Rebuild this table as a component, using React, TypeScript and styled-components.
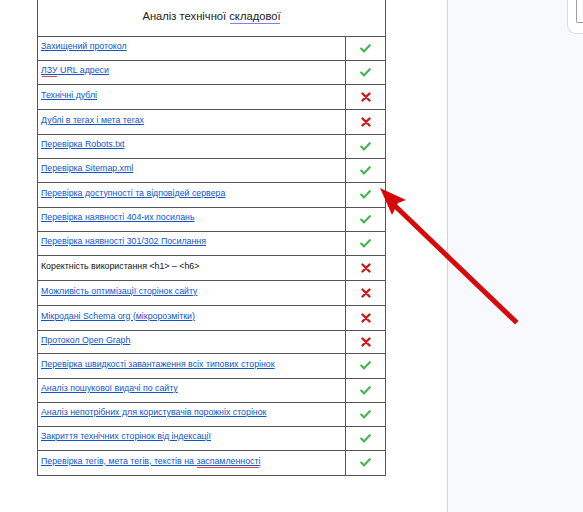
import React from "react";
import styled, { createGlobalStyle } from "styled-components";

const Global = createGlobalStyle`
  html, body { margin: 0; padding: 0; }
  body { width: 583px; height: 512px; overflow: hidden; background: #ffffff; font-family: "Liberation Sans", Arial, sans-serif; }
`;

const Page = styled.div`
  position: relative;
  display: flex;
  width: 583px;
  height: 512px;
  overflow: hidden;
`;

const DocArea = styled.div`
  width: 448px;
  flex: none;
  background: #ffffff;
  border-right: 1px solid #d3d3d3;
  padding-left: 37px;
  box-sizing: border-box;
`;

const SidePanel = styled.div`
  flex: 1;
  background: #f8f9fd;
  display: flex;
  justify-content: flex-end;
  align-items: flex-start;
`;

const CornerCard = styled.div`
  width: 16px;
  height: 34px;
  box-sizing: border-box;
  border: 1px solid #dadce0;
  border-top: none;
  border-right: none;
  border-bottom-left-radius: 9px;
  background: #ffffff;
  padding-left: 8px;
`;

const CornerInner = styled.div`
  width: 100%;
  height: 23px;
  box-sizing: border-box;
  border: 1px solid #9aa0a6;
  border-top: none;
  border-right: none;
  border-bottom-left-radius: 2px;
`;

const Table = styled.table`
  border-collapse: collapse;
  width: 348px;
  table-layout: fixed;
`;

const Col = styled.col<{ $w: number }>`
  width: ${(p) => p.$w}px;
`;

const HeaderCell = styled.th`
  height: 36px;
  padding: 0 0 3px;
  border: 1px solid #555555;
  border-top: none;
  font-weight: normal;
  font-size: 11.2px;
  color: #222222;
  text-align: center;
  vertical-align: middle;
  box-sizing: border-box;
`;

const Row = styled.tr<{ $h: number }>`
  height: ${(p) => p.$h}px;
`;

const LabelCell = styled.td`
  border: 1px solid #555555;
  padding: 0 4px 4px 3px;
  font-size: 8.8px;
  vertical-align: middle;
  white-space: nowrap;
  overflow: hidden;
`;

const MarkCell = styled.td`
  border: 1px solid #555555;
  padding: 0;
  text-align: center;
  vertical-align: middle;
  line-height: 0;
`;

const LinkText = styled.a`
  color: #1155cc;
  text-decoration: underline;
  text-underline-offset: 1px;
`;

const PlainText = styled.span`
  color: #111111;
`;

const Spell = styled.span<{ $c: string }>`
  box-shadow: 0 2px 0 -1px ${(p) => p.$c};
  padding-bottom: 1px;
`;

const Overlay = styled.svg`
  position: absolute;
  left: 0;
  top: 0;
  pointer-events: none;
`;

const Check = () => (
  <svg width="11" height="9" viewBox="0 0 11 9">
    <path d="M1.2 4.6 L4 7.4 L9.8 1.2" fill="none" stroke="#3db54a" strokeWidth="2.1" strokeLinecap="round" strokeLinejoin="round" />
  </svg>
);

const Cross = () => (
  <svg width="10" height="10" viewBox="0 0 10 10">
    <path d="M1.5 1.5 L8.5 8.5 M8.5 1.5 L1.5 8.5" fill="none" stroke="#cc1a1a" strokeWidth="2.4" strokeLinecap="round" />
  </svg>
);

type Item = { text: React.ReactNode; ok: boolean; link?: boolean };

const items: Item[] = [
  { text: "Захищений протокол", ok: true },
  { text: <><Spell $c="#e0434a">ЛЗУ</Spell> URL адреси</>, ok: true },
  { text: "Технічні дублі", ok: false },
  { text: "Дублі в тегах і мета тегах", ok: false },
  { text: "Перевірка Robots.txt", ok: true },
  { text: "Перевірка Sitemap.xml", ok: true },
  { text: "Перевірка доступності та відповідей сервера", ok: true },
  { text: "Перевірка наявності 404-их посилань", ok: true },
  { text: "Перевірка наявності 301/302 Посилання", ok: true },
  { text: "Коректність використання <h1> – <h6>", ok: false, link: false },
  { text: "Можливість оптимізації сторінок сайту", ok: false },
  { text: "Мікродані Schema org (мікророзмітки)", ok: false },
  { text: "Протокол Open Graph", ok: false },
  { text: "Перевірка швидкості завантаження всіх типових сторінок", ok: true },
  { text: "Аналіз пошукової видачі по сайту", ok: true },
  { text: "Аналіз непотрібних для користувачів порожніх сторінок", ok: true },
  { text: "Закриття технічних сторінок від індексації", ok: true },
  { text: <>Перевірка тегів, мета тегів, текстів на <Spell $c="#e0434a">заспамленності</Spell></>, ok: true },
];

const heights = [24, 24, 25, 25, 24, 24, 25, 24, 24, 25, 25, 25, 23, 25, 24, 24, 24, 25];

export default function App() {
  return (
    <>
      <Global />
      <Page>
        <DocArea>
          <Table>
            <colgroup>
              <Col $w={308} />
              <Col $w={40} />
            </colgroup>
            <thead>
              <tr>
                <HeaderCell colSpan={2}>
                  Аналіз технічної <Spell $c="#8080ee">складової</Spell>
                </HeaderCell>
              </tr>
            </thead>
            <tbody>
              {items.map((it, i) => (
                <Row key={i} $h={heights[i]}>
                  <LabelCell>
                    {it.link === false ? (
                      <PlainText>{it.text}</PlainText>
                    ) : (
                      <LinkText href="#">{it.text}</LinkText>
                    )}
                  </LabelCell>
                  <MarkCell>{it.ok ? <Check /> : <Cross />}</MarkCell>
                </Row>
              ))}
            </tbody>
          </Table>
        </DocArea>
        <SidePanel>
          <CornerCard>
            <CornerInner />
          </CornerCard>
        </SidePanel>
        <Overlay width="583" height="512" viewBox="0 0 583 512">
          <path d="M515 321 L392 203" stroke="#d60a0a" strokeWidth="5" strokeLinecap="square" fill="none" />
          <path d="M380 188 L406 200 L398 203 L392 215 Z" fill="#d60a0a" />
        </Overlay>
      </Page>
    </>
  );
}
